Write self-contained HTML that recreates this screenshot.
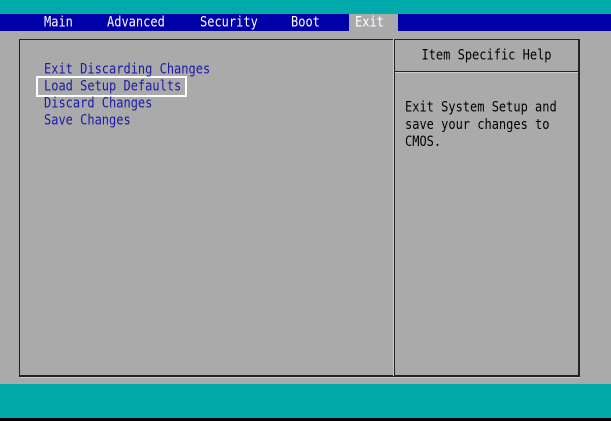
<html><head><style>
body{margin:0;width:611px;height:421px;background:#aaa;position:relative;overflow:hidden;font-family:"DejaVu Sans Mono","Liberation Mono",monospace;font-size:12px;}
div{position:absolute;}
.t{color:#fff;top:14px;line-height:17px;transform:scaleY(1.15);}
.m{color:#1a1aa8;left:44px;line-height:17px;transform:scaleY(1.15);}
.h{color:#000;transform:scaleY(1.15);}
</style></head><body>
<div style="left:0;top:0;width:611px;height:14px;background:#00aaaa"></div>
<div style="left:0;top:14px;width:611px;height:17px;background:#0000a8"></div>
<div style="left:349px;top:14px;width:49px;height:17px;background:#aaa"></div>
<div class="t" style="left:44px">Main</div>
<div class="t" style="left:107px">Advanced</div>
<div class="t" style="left:200px">Security</div>
<div class="t" style="left:291px">Boot</div>
<div class="t" style="left:355px">Exit</div>
<div style="left:19px;top:39px;width:558px;height:335px;border:1px solid #222;border-right-width:2px;border-bottom-width:2px"></div>
<div style="left:393px;top:39px;width:0;height:337px;border-left:1px solid #ccc;border-right:1px solid #222"></div>
<div style="left:395px;top:71px;width:183px;height:0;border-top:1px solid #222;border-bottom:1px solid #ccc"></div>
<div style="left:20px;top:377px;width:560px;height:1px;background:#ccc"></div>
<div style="left:36px;top:76px;width:147px;height:17px;border:2px solid #fff"></div>
<div class="m" style="top:61px">Exit Discarding Changes</div>
<div class="m" style="top:78px">Load Setup Defaults</div>
<div class="m" style="top:95px">Discard Changes</div>
<div class="m" style="top:112px">Save Changes</div>
<div class="h" style="left:395px;width:183px;top:48px;text-align:center">Item Specific Help</div>
<div class="h" style="left:405px;top:99px;line-height:14.8px;transform-origin:0 0">Exit System Setup and<br>save your changes to<br>CMOS.</div>
<div style="left:0;top:384px;width:611px;height:34px;background:#00aaaa"></div>
<div style="left:0;top:418px;width:611px;height:3px;background:#000"></div>
</body></html>
